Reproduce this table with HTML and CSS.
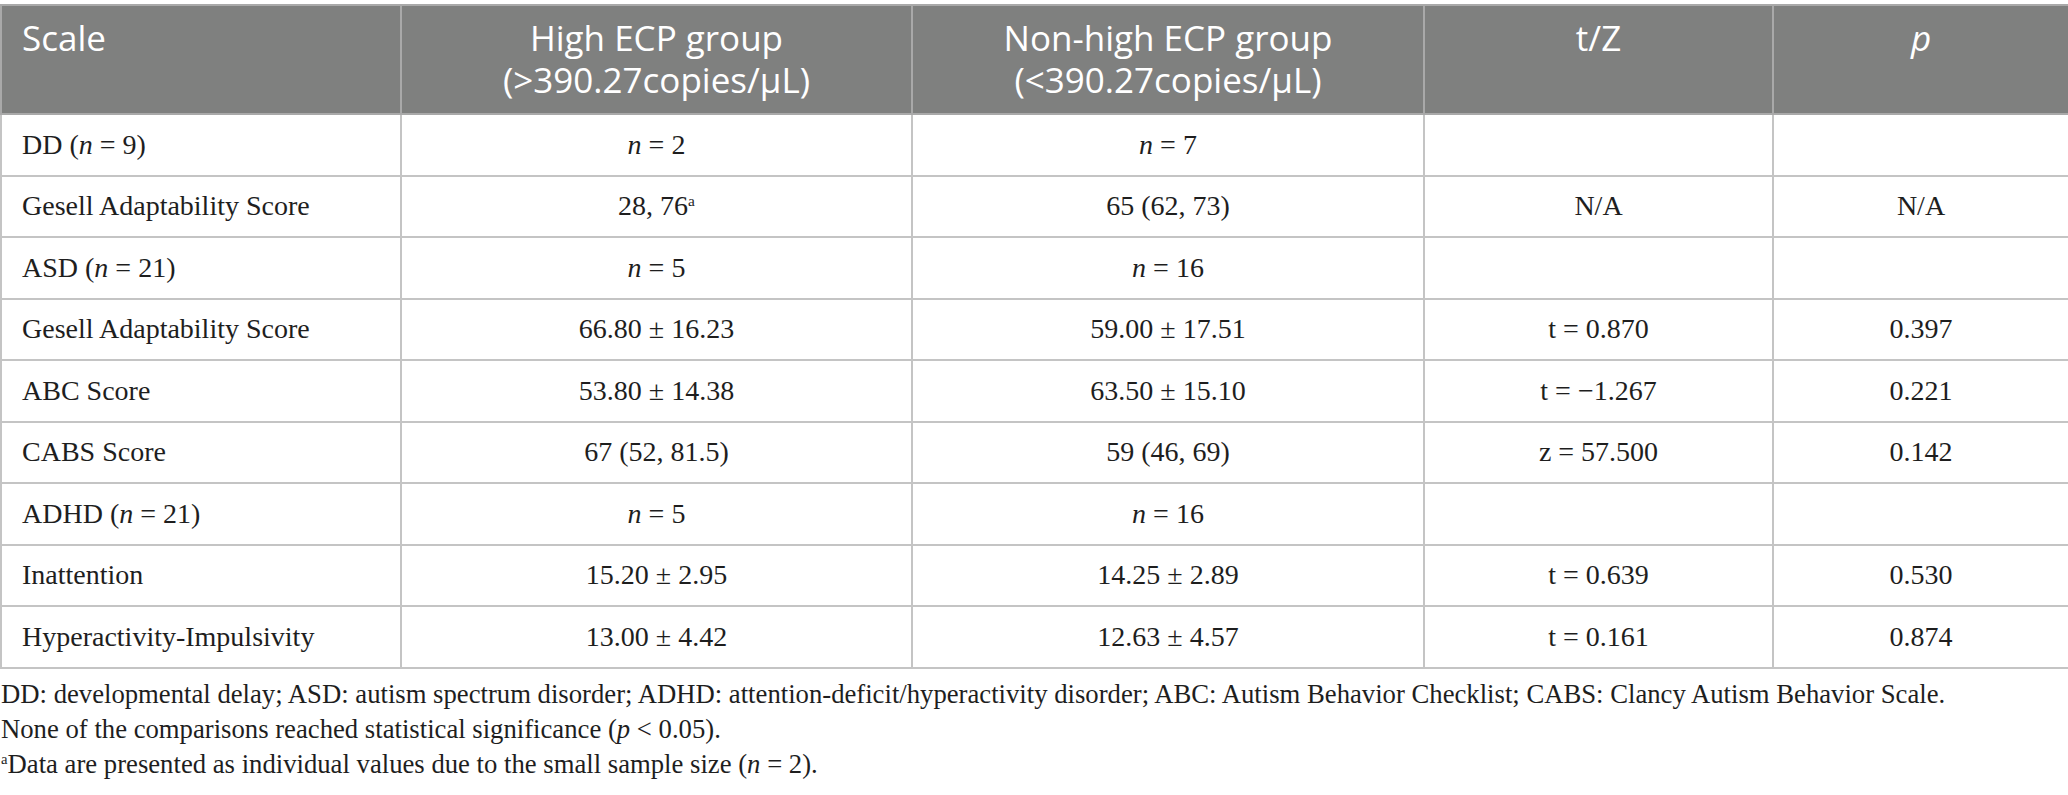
FILE: index.html
```html
<!DOCTYPE html>
<html lang="en">
<head>
<meta charset="utf-8">
<title>Table</title>
<link rel="stylesheet" href="styles.css">
</head>
<body>
<div class="wrap">
<table class="data">
  <colgroup>
    <col class="c1"><col class="c2"><col class="c3"><col class="c4"><col class="c5">
  </colgroup>
  <thead>
    <tr>
      <th class="left">Scale</th>
      <th>High ECP group<br>(&gt;390.27copies/μL)</th>
      <th>Non-high ECP group<br>(&lt;390.27copies/μL)</th>
      <th>t/Z</th>
      <th><i>p</i></th>
    </tr>
  </thead>
  <tbody>
    <tr><td class="left">DD (<i>n</i> = 9)</td><td><i>n</i> = 2</td><td><i>n</i> = 7</td><td></td><td></td></tr>
    <tr><td class="left">Gesell Adaptability Score</td><td>28, 76<sup>a</sup></td><td>65 (62, 73)</td><td>N/A</td><td>N/A</td></tr>
    <tr><td class="left">ASD (<i>n</i> = 21)</td><td><i>n</i> = 5</td><td><i>n</i> = 16</td><td></td><td></td></tr>
    <tr><td class="left">Gesell Adaptability Score</td><td>66.80 ± 16.23</td><td>59.00 ± 17.51</td><td>t = 0.870</td><td>0.397</td></tr>
    <tr><td class="left">ABC Score</td><td>53.80 ± 14.38</td><td>63.50 ± 15.10</td><td>t = −1.267</td><td>0.221</td></tr>
    <tr><td class="left">CABS Score</td><td>67 (52, 81.5)</td><td>59 (46, 69)</td><td>z = 57.500</td><td>0.142</td></tr>
    <tr><td class="left">ADHD (<i>n</i> = 21)</td><td><i>n</i> = 5</td><td><i>n</i> = 16</td><td></td><td></td></tr>
    <tr><td class="left">Inattention</td><td>15.20 ± 2.95</td><td>14.25 ± 2.89</td><td>t = 0.639</td><td>0.530</td></tr>
    <tr><td class="left">Hyperactivity-Impulsivity</td><td>13.00 ± 4.42</td><td>12.63 ± 4.57</td><td>t = 0.161</td><td>0.874</td></tr>
  </tbody>
</table>
<div class="notes">
  <p>DD: developmental delay; ASD: autism spectrum disorder; ADHD: attention-deficit/hyperactivity disorder; ABC: Autism Behavior Checklist; CABS: Clancy Autism Behavior Scale.</p>
  <p>None of the comparisons reached statistical significance (<i>p</i> &lt; 0.05).</p>
  <p><sup>a</sup>Data are presented as individual values due to the small sample size (<i>n</i> = 2).</p>
</div>
</div>
</body>
</html>
```

FILE: styles.css
```css
html, body {
  margin: 0;
  padding: 0;
  background: #ffffff;
}

.wrap {
  padding-top: 4px;
}

.data {
  width: 2068px;
  border-collapse: collapse;
  table-layout: fixed;
  font-family: "Liberation Serif", "Times New Roman", serif;
  color: #1e1e1e;
}

.c1 { width: 400px; }
.c2 { width: 511px; }
.c3 { width: 512px; }
.c4 { width: 349px; }
.c5 { width: 296px; }

.data th {
  background: #7f807f;
  color: #ffffff;
  font-family: "Open Sans", "Liberation Sans", sans-serif;
  font-weight: 400;
  font-size: 35px;
  line-height: 42px;
  text-align: center;
  vertical-align: top;
  height: 109px;
  box-sizing: border-box;
  padding: 11px 20px 0;
  border: 2px solid #a9a9a9;
}

.data td {
  font-size: 28px;
  line-height: 32px;
  text-align: center;
  vertical-align: middle;
  height: 61.5px;
  box-sizing: border-box;
  padding: 0 20px;
  border: 2px solid #c4c4c4;
}

.data .left {
  text-align: left;
}

.data sup, .notes sup {
  font-size: 0.55em;
  line-height: 0;
  vertical-align: 0.6em;
}

.notes {
  font-family: "Liberation Serif", "Times New Roman", serif;
  font-size: 26.7px;
  line-height: 35px;
  color: #1e1e1e;
  padding-top: 8px;
}

.notes p {
  margin: 0;
  padding-left: 1px;
}
```
